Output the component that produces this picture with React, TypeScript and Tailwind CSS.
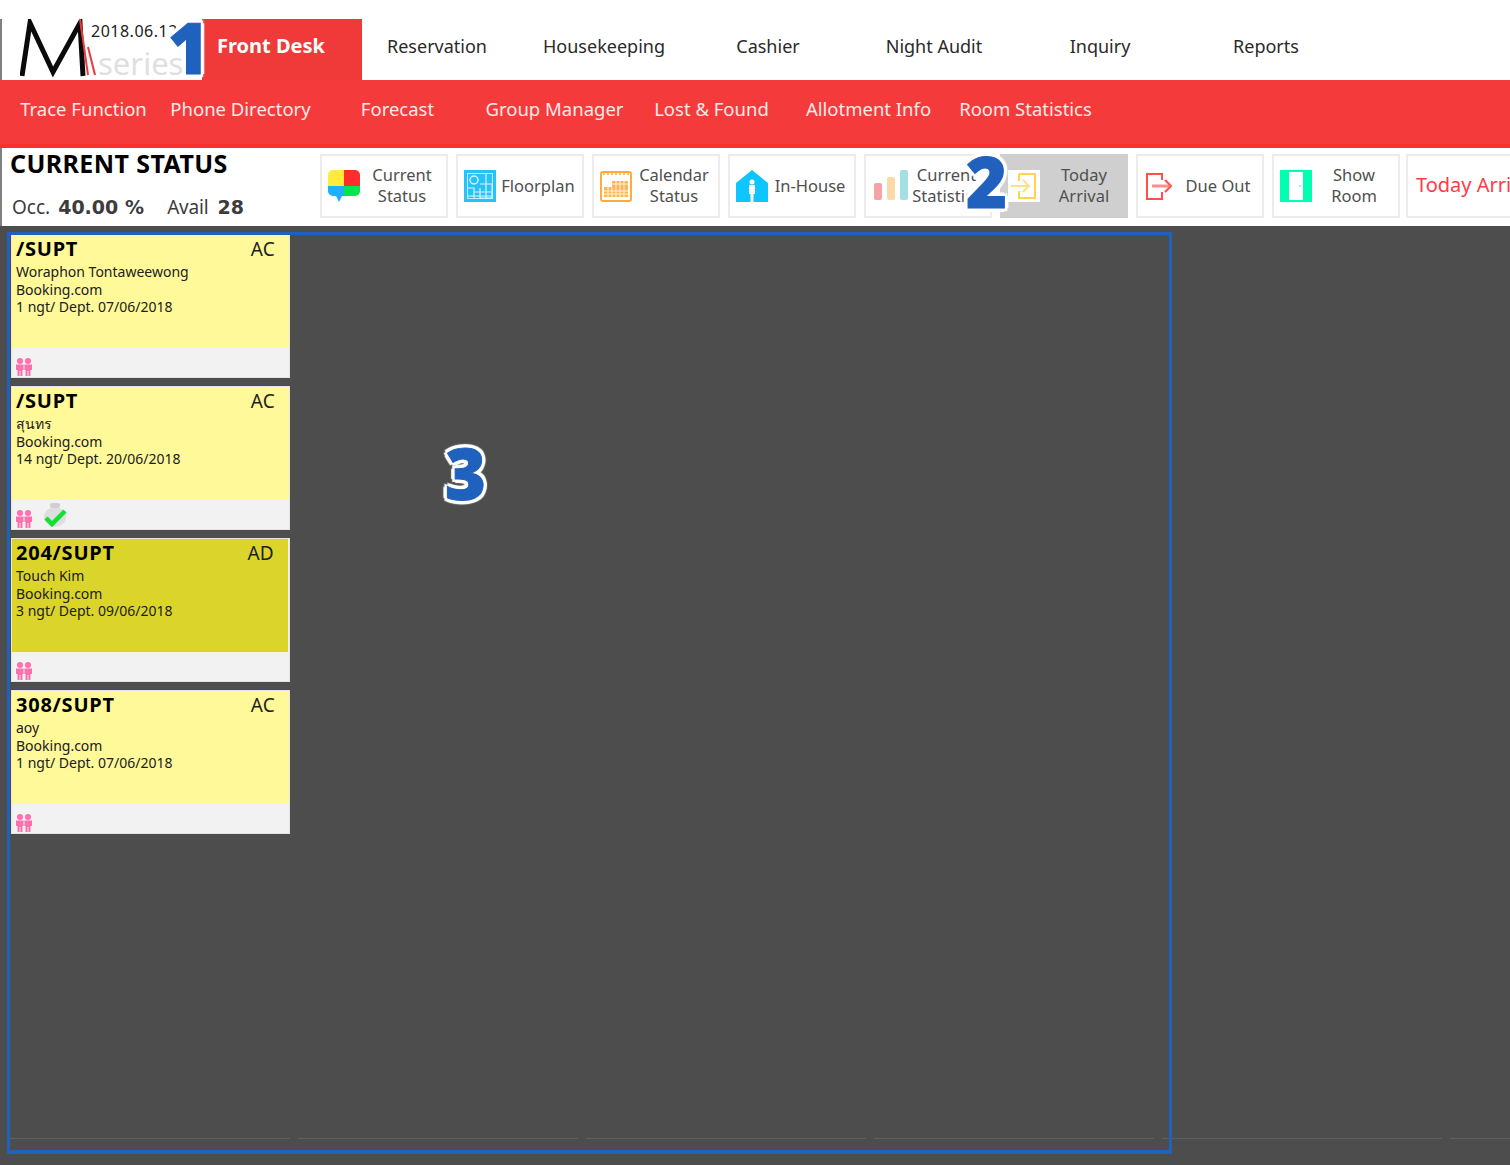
import React from 'react';

const topTabs = [
    { label: 'Reservation', width: 'w-[150px]' },
    { label: 'Housekeeping', width: 'w-[184px]' },
    { label: 'Cashier', width: 'w-[144px]' },
    { label: 'Night Audit', width: 'w-[188px]' },
    { label: 'Inquiry', width: 'w-[144px]' },
    { label: 'Reports', width: 'w-[188px]' },
];

const subTabs = ['Trace Function', 'Phone Directory', 'Forecast', 'Group Manager', 'Lost & Found', 'Allotment Info', 'Room Statistics'];

const cards = [
    { title: '/SUPT', code: 'AC', name: 'Woraphon Tontaweewong', nights: '1 ngt/ Dept. 07/06/2018', dark: false, checked: false },
    { title: '/SUPT', code: 'AC', name: 'สุนทร', nights: '14 ngt/ Dept. 20/06/2018', dark: false, checked: true },
    { title: '204/SUPT', code: 'AD', name: 'Touch Kim', nights: '3 ngt/ Dept. 09/06/2018', dark: true, checked: false },
    { title: '308/SUPT', code: 'AC', name: 'aoy', nights: '1 ngt/ Dept. 07/06/2018', dark: false, checked: false },
];

const StatusIcon = () => (
    <svg width="32" height="32" viewBox="0 0 32 32">
        <path d="M5 0H16V16H0V5A5 5 0 0 1 5 0Z" fill="#ffeb3b" />
        <path d="M16 0H27A5 5 0 0 1 32 5V16H16Z" fill="#ff2d2d" />
        <path d="M0 16H16V26H14L11 32L8 26H5A5 5 0 0 1 0 21Z" fill="#1eb0ff" />
        <path d="M16 16H32V21A5 5 0 0 1 27 26H16Z" fill="#00e64d" />
    </svg>
);

const FloorplanIcon = () => (
    <svg width="32" height="32" viewBox="0 0 32 32">
        <rect width="32" height="32" fill="#27c2fb" />
        <rect x="3.5" y="3.5" width="25" height="25" fill="none" stroke="#bdeeff" strokeWidth="1" />
        <circle cx="10" cy="10" r="4" fill="none" stroke="#d5f3ff" strokeWidth="1.5" />
        <path d="M22 4V28M4 18H10V28M10 22H28M16 14H28V28H16V18M4 26H28" fill="none" stroke="#d5f3ff" strokeWidth="1.2" />
    </svg>
);

const CalendarIcon = () => (
    <svg width="32" height="32" viewBox="0 0 32 32">
        <rect x="1" y="2" width="30" height="29" rx="2" fill="#fff" stroke="#ffab40" strokeWidth="2" />
        <path d="M4 1V5M8 1V5M12 1V5M16 1V5M20 1V5M24 1V5M28 1V5" stroke="#ffab40" strokeWidth="1.5" />
        <path d="M12 11H28V27H4V17H12Z" fill="#ffb74d" />
        <path d="M4 21H28M4 24H28M12 14H28M16 11V27M20 11V27M24 11V27M8 17V27M12 17V27" stroke="#fff" strokeWidth="0.8" />
    </svg>
);

const InHouseIcon = () => (
    <svg width="32" height="32" viewBox="0 0 32 32">
        <path d="M16 0L32 13V32H0V13Z" fill="#0ec5ff" />
        <circle cx="16" cy="12" r="2.5" fill="#fff" />
        <path d="M13 15H19V24H17.5V32H14.5V24H13Z" fill="#fff" />
    </svg>
);

const StatsIcon = () => (
    <svg width="38" height="32" viewBox="0 0 38 32">
        <rect x="2" y="13" width="8" height="17" rx="2" fill="#f5a3a8" />
        <rect x="15" y="7" width="8" height="23" rx="2" fill="#fbd9a8" />
        <rect x="28" y="0" width="8" height="30" rx="2" fill="#a5dfe3" />
    </svg>
);

const ArrivalIcon = () => (
    <svg width="32" height="32" viewBox="0 0 32 32" className="bg-white">
        <path d="M11 4H27V28H11V21M11 11V4" fill="none" stroke="#ffd54f" strokeWidth="2" />
        <path d="M3 16H20M15 10L21 16L15 22" fill="none" stroke="#ffe082" strokeWidth="2" />
    </svg>
);

const DueOutIcon = () => (
    <svg width="32" height="32" viewBox="0 0 32 32">
        <path d="M18 10V4H3V29H18V22" fill="none" stroke="#ff5149" strokeWidth="2" />
        <path d="M8 16H25" stroke="#ff8f8a" strokeWidth="3" />
        <path d="M21 10L27 16L21 22" fill="none" stroke="#ff5149" strokeWidth="2" />
    </svg>
);

const RoomIcon = () => (
    <svg width="32" height="32" viewBox="0 0 32 32">
        <rect width="32" height="32" fill="#00ffb0" />
        <rect x="9" y="2" width="14" height="28" fill="#fff" />
        <rect x="19" y="15" width="2" height="2" fill="#8fffd8" />
    </svg>
);

const PeopleIcon = () => (
    <svg width="16" height="18" viewBox="0 0 16 18">
        <g fill="#ff6fae">
            <circle cx="4" cy="3" r="3" />
            <circle cx="12" cy="3" r="3" />
            <path d="M0 6.5H7.5V12H6.5V18H4.5V13H3.5V18H1.5V12H0Z" />
            <path d="M8.5 6.5H16V12H14.5V18H12.5V13H11.5V18H9.5V12H8.5Z" />
        </g>
    </svg>
);

const CheckIcon = () => (
    <svg width="26" height="26" viewBox="0 0 26 26">
        <ellipse cx="12" cy="15" rx="11" ry="10" fill="#dedede" />
        <rect x="7" y="1" width="10" height="5" rx="2" fill="#cfcfcf" />
        <path d="M3 16L9 22L22 9" fill="none" stroke="#12e032" strokeWidth="4.5" />
    </svg>
);

const ToolButton = ({ children, icon, active }: { children: React.ReactNode; icon: React.ReactNode; active?: boolean }) => (
    <div className={`flex h-16 w-[128px] shrink-0 items-center ${active ? 'bg-[#cfcfcf] pl-2' : 'border-2 border-[#ececec] bg-white pl-1.5'}`}>
        <div className="shrink-0">{icon}</div>
        <div className={`flex-1 pb-[2px] text-center text-[16.5px] leading-[21px] whitespace-nowrap text-[#4f4f4f] ${active ? '' : 'pr-[2px]'}`}>{children}</div>
    </div>
);

const Marker = ({ value, className }: { value: string; className: string }) => (
    <div className={`absolute font-['Open_Sans',sans-serif] text-[70px] leading-none font-extrabold text-[#2061bd] [-webkit-text-stroke:1px_#2061bd] [text-shadow:4px_0_1px_#fff,-4px_0_1px_#fff,0_4px_1px_#fff,0_-4px_1px_#fff,3px_3px_1px_#fff,-3px_3px_1px_#fff,3px_-3px_1px_#fff,-3px_-3px_1px_#fff] ${className}`}>
        {value}
    </div>
);

const BookingCard = ({ card }: { card: (typeof cards)[number] }) => (
    <div className="flex h-36 w-[279px] flex-col border border-[#e4e4e4] bg-[#f2f2f2]">
        <div className={`h-[113px] px-[4px] text-black ${card.dark ? 'mr-px bg-[#dbd52b]' : 'bg-[#fff999]'}`}>
            <div className="flex items-center justify-between pr-[10px]">
                <span className="text-[20px] leading-[28px] font-bold tracking-[0.75px]">{card.title}</span>
                <span className="text-[19px] leading-[28px] tracking-[0.3px] text-[#222]">{card.code}</span>
            </div>
            <div className="text-[14px] leading-[17.7px] text-[#202020]">
                <div>{card.name}</div>
                <div>Booking.com</div>
                <div>{card.nights}</div>
            </div>
        </div>
        <div className="flex flex-1 items-end gap-[11px] pb-[1px] pl-[4px]">
            <PeopleIcon />
            {card.checked && <CheckIcon />}
        </div>
    </div>
);

export default function App() {
    return (
        <div className="relative flex h-[1165px] w-[1510px] flex-col overflow-hidden bg-white font-['Noto_Sans',sans-serif]">
            <div className="h-[19px] bg-white" />

            <div className="flex h-[61px] border-l-2 border-[#808080]">
                <div className="relative w-[200px] shrink-0 overflow-hidden">
                    <svg width="84" height="58" viewBox="0 0 84 58" className="absolute top-0 left-[18px]">
                        <path d="M2 57L10 4L33 53L60 4L63 57" fill="none" stroke="#0a0a0a" strokeWidth="5" />
                        <path d="M60 0L68 56" stroke="#ee3a3a" strokeWidth="2" />
                        <path d="M68 28L75 56" stroke="#ee3a3a" strokeWidth="2" />
                    </svg>
                    <span className="absolute top-[1px] left-[89px] text-[16px] leading-[22px] tracking-[0.5px] text-[#222]">2018.06.12</span>
                    <span className="absolute top-[21px] left-[96px] text-[31px] leading-[46px] text-[#e0e0e0]">series</span>
                </div>
                <div className="flex w-[160px] items-center bg-[#f03a3a] pb-[7px] pl-[15px] text-[20px] font-bold text-white">Front Desk</div>
                {topTabs.map(tab => (
                    <div key={tab.label} className={`${tab.width} flex shrink-0 items-center justify-center pb-[7px] text-[18px] text-[#2a2a2a]`}>
                        {tab.label}
                    </div>
                ))}
            </div>

            <div className="flex h-[68px] border-b-4 border-[#f92f2b] bg-[#f43a3a] pl-[5px] text-[18.5px] text-[#ffeaea]">
                {subTabs.map(tab => (
                    <div key={tab} className="w-[157px] shrink-0 pt-[14px] text-center leading-[30px]">{tab}</div>
                ))}
            </div>

            <div className="flex h-[78px] overflow-hidden border-l-2 border-[#808080] bg-white">
                <div className="w-[318px] shrink-0 pl-2">
                    <div className="text-[25px] leading-[30px] font-bold tracking-[0.4px] text-black">CURRENT STATUS</div>
                    <div className="mt-[15px] flex pl-0.5 text-[19px] leading-[28px] text-[#3c3c3c]">
                        <span>Occ.</span>
                        <b className="ml-[8px] w-[109px] font-['DejaVu_Sans',sans-serif] text-[19px]">40.00 %</b>
                        <span className="tracking-[-0.2px]">Avail</span>
                        <b className="ml-[9px] font-['DejaVu_Sans',sans-serif] text-[19px]">28</b>
                    </div>
                </div>
                <div className="flex items-start gap-2 pt-1.5">
                    <ToolButton icon={<StatusIcon />}>Current<br />Status</ToolButton>
                    <ToolButton icon={<FloorplanIcon />}>Floorplan</ToolButton>
                    <ToolButton icon={<CalendarIcon />}>Calendar<br />Status</ToolButton>
                    <ToolButton icon={<InHouseIcon />}>In-House</ToolButton>
                    <ToolButton icon={<StatsIcon />}><div className="-ml-[5px]">Current<br />Statistics</div></ToolButton>
                    <ToolButton active icon={<ArrivalIcon />}>Today<br />Arrival</ToolButton>
                    <ToolButton icon={<DueOutIcon />}>Due Out</ToolButton>
                    <ToolButton icon={<RoomIcon />}>Show<br />Room</ToolButton>
                    <div className="-ml-[2px] flex h-16 w-[128px] shrink-0 items-center whitespace-nowrap border-2 border-[#ececec] pb-[2px] pl-2 text-[20px] text-[#ff3b47]">Today Arrival</div>
                </div>
            </div>

            <div className="flex flex-1 flex-col bg-[#4d4d4d] pt-2 pl-[11px]">
                <div className="flex flex-col gap-2">
                    {cards.map(card => (
                        <BookingCard key={card.nights + card.name} card={card} />
                    ))}
                </div>
                <div className="mt-auto mb-[26px] -ml-px flex gap-2">
                    {[0, 1, 2, 3, 4, 5].map(i => (
                        <div key={i} className="h-px w-[280px] shrink-0 bg-[#5e5e5e]" />
                    ))}
                </div>
            </div>

            <div className="absolute top-[232px] left-[7px] h-[922px] w-[1165px] border-[3px] border-b-4 border-[#2061bd]" />
            <Marker value="1" className="top-[12px] left-[168px]" />
            <Marker value="2" className="top-[146px] left-[966px]" />
            <Marker value="3" className="top-[438px] left-[445px]" />
        </div>
    );
}
